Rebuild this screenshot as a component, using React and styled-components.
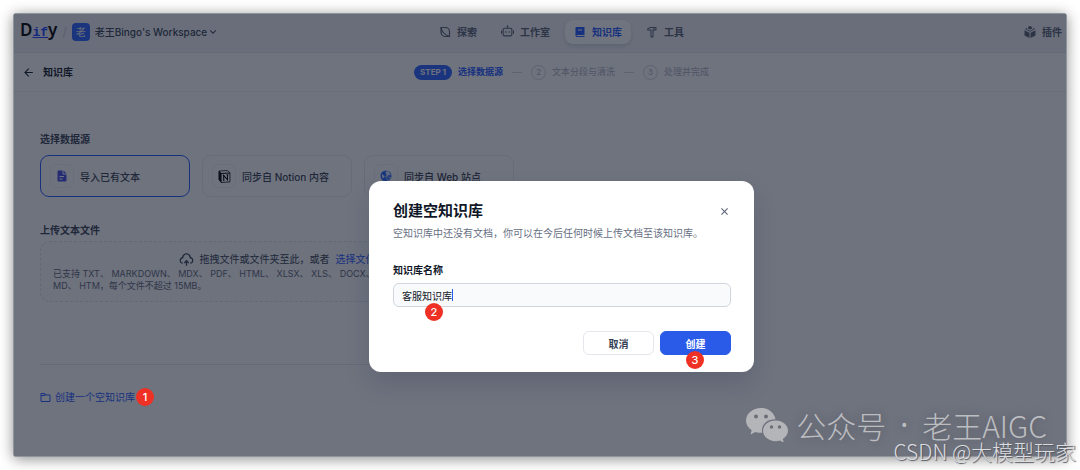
import React, { useState } from "react";
import styled, { createGlobalStyle } from "styled-components";
import {
  RiArrowDownSLine,
  RiArrowLeftLine,
  RiBook2Fill,
  RiCloseLine,
  RiHammerLine,
  RiRobot2Line,
  RiUploadCloud2Line,
} from "react-icons/ri";

const GlobalStyle = createGlobalStyle`
  * {
    box-sizing: border-box;
  }

  body {
    margin: 0;
    background: #ffffff;
    font-family: Inter, "Noto Sans CJK SC", sans-serif;
    font-size: 10px;
    line-height: 16px;
    color: #354052;
  }

  h1, h2, p {
    margin: 0;
  }

  button, input {
    font-family: inherit;
    font-size: 10px;
  }
`;

const Page = styled.div`
  position: relative;
  min-height: 100vh;
  padding: 13px;
  display: flex;
`;

const Window = styled.div`
  position: relative;
  flex: 1;
  min-width: 0;
  overflow: hidden;
  background: #fdfdff;
  border-radius: 4px;
  box-shadow: 0 2px 14px rgba(0, 0, 0, 0.45);
`;

const Header = styled.header`
  display: grid;
  grid-template-columns: 10fr auto 9fr;
  align-items: center;
  height: 40px;
  padding: 0 5px 2px 7px;
  background: #eff1f6;
  border-bottom: 1px solid #e4e6f0;
`;

const Brand = styled.div`
  display: flex;
  align-items: center;
`;

const Logo = styled.a`
  color: #000000;
  font-family: "Noto Sans", sans-serif;
  font-size: 17px;
  line-height: 24px;
  font-weight: 600;
  text-decoration: none;
`;

const LogoAccent = styled.span`
  color: #1a3cff;
  font-family: "Liberation Mono", monospace;
  font-size: 13px;
  font-weight: 700;
  text-decoration: underline;
`;

const Slash = styled.span`
  margin: 0 5px;
  color: #c3c7d4;
  font-size: 12px;
`;

const Avatar = styled.span`
  width: 18px;
  height: 18px;
  margin-right: 5px;
  border-radius: 4px;
  background: #2a62ff;
  color: #e6e9f2;
  line-height: 18px;
  text-align: center;
`;

const WorkspaceButton = styled.button`
  display: flex;
  align-items: center;
  padding: 0;
  border: none;
  background: none;
  color: #354052;
  font-weight: 500;
`;

const Nav = styled.nav`
  display: flex;
  gap: 6px;
`;

const NavItem = styled.a`
  display: flex;
  align-items: center;
  gap: 6px;
  height: 24px;
  padding: 0 9px;
  border-radius: 8px;
  color: ${(props) => (props.$active ? "#2458ff" : "#566074")};
  background: ${(props) => (props.$active ? "#ffffff" : "transparent")};
  box-shadow: ${(props) =>
    props.$active ? "0 2px 5px rgba(9, 20, 60, 0.14)" : "none"};
  font-weight: 600;
  text-decoration: none;
`;

const PluginLink = styled(NavItem)`
  justify-self: end;
  padding: 0;
`;

const SubHeader = styled.div`
  display: grid;
  grid-template-columns: 10fr auto 9fr;
  align-items: center;
  height: 39px;
  padding: 0 5px 0 9px;
  border-bottom: 1px solid #f0f1f7;
`;

const BackLink = styled.a`
  display: flex;
  align-items: center;
  gap: 8px;
  color: #101828;
  font-weight: 700;
  text-decoration: none;
`;

const Steps = styled.ol`
  display: flex;
  align-items: center;
  gap: 9px;
  margin: 0;
  padding: 0;
  list-style: none;
`;

const Step = styled.li`
  display: flex;
  align-items: center;
  gap: 6px;
  font-size: 9px;
  color: ${(props) => (props.$active ? "#2458ff" : "#a9afbd")};
  font-weight: ${(props) => (props.$active ? 700 : 400)};
`;

const StepPill = styled.span`
  height: 15px;
  padding: 0 6px;
  border-radius: 8px;
  background: #2a62ff;
  color: #f2f4fa;
  font-size: 8px;
  line-height: 15px;
`;

const StepCircle = styled.span`
  width: 15px;
  height: 15px;
  border: 1px solid #cfd3de;
  border-radius: 50%;
  font-size: 8px;
  line-height: 13px;
  text-align: center;
`;

const Dash = styled.li`
  width: 10px;
  height: 1px;
  background: #cfd3de;
`;

const Main = styled.main`
  max-width: 528px;
  padding: 39px 27px 0;
`;

const SectionTitle = styled.h2`
  font-size: 10px;
  line-height: 16px;
  font-weight: 700;
  color: #354052;
`;

const SourceList = styled.div`
  display: grid;
  grid-template-columns: repeat(3, 1fr);
  gap: 12px;
  margin: 8px 0 25px;
`;

const SourceCard = styled.button`
  display: flex;
  align-items: center;
  gap: 6px;
  height: 42px;
  padding: 0 9px;
  border: 1px solid ${(props) => (props.$active ? "#2458ff" : "#e6e8f3")};
  border-radius: 9px;
  background: none;
  color: #354052;
  font-weight: 500;
  white-space: nowrap;
`;

const SourceIcon = styled.span`
  display: flex;
  align-items: center;
  justify-content: center;
  width: 24px;
  height: 24px;
  border: 1px solid #f0f1f7;
  border-radius: 6px;
`;

const DropZone = styled.div`
  height: 61px;
  margin: 3px 0 62px;
  padding: 8px 12px;
  border: 1px dashed #dfe2ec;
  border-radius: 9px;
  background: #f8f9fc;
`;

const DropTitle = styled.div`
  display: flex;
  align-items: center;
  justify-content: center;
  gap: 6px;
  line-height: 18px;
`;

const Formats = styled.p`
  color: #5f6678;
  font-size: 9px;
  line-height: 12px;
  white-space: nowrap;
`;

const TextLink = styled.a`
  display: flex;
  align-items: center;
  gap: 4px;
  color: #2458ff;
  text-decoration: none;
`;

const CreateRow = styled.div`
  display: flex;
  align-items: center;
  gap: 1px;
  padding-top: 23px;
  border-top: 1px solid #e3e5ee;
`;

const Marker = styled.span`
  position: relative;
  z-index: 3;
  width: 18px;
  height: 18px;
  border-radius: 50%;
  background: #ee3124;
  color: #ffffff;
  font-size: 11px;
  line-height: 18px;
  font-weight: 500;
  text-align: center;
`;

const HangingMarker = styled(Marker)`
  position: absolute;
  top: ${(props) => props.$top}px;
  left: ${(props) => props.$left}px;
`;

const Overlay = styled.div`
  position: absolute;
  inset: 0;
  z-index: 2;
  display: flex;
  justify-content: center;
  align-items: flex-start;
  padding: 168px 0 0 43px;
  background: rgba(16, 24, 40, 0.6);
  box-shadow: inset 0 0 0 1px rgba(160, 164, 172, 0.7);
`;

const Dialog = styled.form`
  width: 385px;
  padding: 20px 23px 17px 24px;
  border-radius: 12px;
  background: #ffffff;
  box-shadow: 0 12px 24px rgba(16, 24, 60, 0.14);
`;

const DialogHeader = styled.div`
  display: flex;
  align-items: center;
  justify-content: space-between;
`;

const DialogTitle = styled.h1`
  color: #101828;
  font-size: 15px;
  line-height: 20px;
  font-weight: 700;
`;

const CloseButton = styled.button`
  display: flex;
  padding: 0;
  border: none;
  background: none;
  color: #5b6479;
`;

const DialogText = styled.p`
  margin: 4px 0 21px;
  color: #676f83;
  white-space: nowrap;
`;

const Label = styled.label`
  display: block;
  margin-bottom: 5px;
  color: #101828;
  font-weight: 700;
`;

const Field = styled.div`
  position: relative;
  margin-bottom: 24px;
`;

const TextInput = styled.input`
  display: block;
  width: 100%;
  height: 24px;
  padding: 0 8px;
  border: 1px solid #d0d5dd;
  border-radius: 6px;
  background: #f9fafb;
  color: #101828;
  outline: none;
`;

const Caret = styled.span`
  position: absolute;
  top: 6px;
  left: 59px;
  width: 1px;
  height: 12px;
  background: #2a5cf0;
`;

const Actions = styled.div`
  display: flex;
  justify-content: flex-end;
  gap: 6px;
`;

const Action = styled.div`
  position: relative;
`;

const Button = styled.button`
  width: 71px;
  height: 24px;
  padding: 0;
  border: 1px solid ${(props) => (props.$primary ? "#2a5ae8" : "#e4e7ec")};
  border-radius: 6px;
  background: ${(props) => (props.$primary ? "#2a5ae8" : "#ffffff")};
  color: ${(props) => (props.$primary ? "#ffffff" : "#344054")};
  font-weight: 600;
`;

const AccountMark = styled.div`
  position: absolute;
  right: 33px;
  bottom: 25px;
  z-index: 4;
  display: flex;
  align-items: center;
  gap: 8px;
  color: #bcbdc1;
  font-family: "Noto Sans CJK SC", sans-serif;
  font-size: 30px;
  font-weight: 300;
  line-height: 40px;
  text-shadow: 0 0 10px rgba(40, 42, 50, 0.4);
`;

const AccountDot = styled.span`
  width: 20px;
  font-family: "Noto Sans", sans-serif;
  font-weight: 400;
  text-align: center;
`;

const SiteMark = styled.div`
  position: absolute;
  right: 4px;
  bottom: 5px;
  z-index: 5;
  color: #dcdde0;
  font-family: "Noto Sans CJK SC", sans-serif;
  font-size: 21px;
  font-weight: 300;
  line-height: 28px;
  text-shadow: 1px 1px 1px #55575e;
`;

const ExploreIcon = () => (
  <svg width="12" height="12" viewBox="0 0 24 24" fill="none" stroke="currentColor" strokeWidth="2.4">
    <path d="M4 3h9a8 8 0 0 1 8 8v10h-9a8 8 0 0 1-6-3 9 9 0 0 1-2-6z" strokeLinejoin="round" />
    <path d="M4 3c1 8 6 14 17 18" />
  </svg>
);

const PluginIcon = () => (
  <svg width="12" height="12" viewBox="0 0 24 24" fill="currentColor">
    <path d="M12 0l4 2v3l-4 2-4-2V2zM2 6l4-2v2.500l6 3 6-3V4l4 2-10 5.500zM1 8.500l10 5V24l-10-5zM23 8.500l-10 5V24l10-5z" />
  </svg>
);

const FileIcon = () => (
  <svg width="12" height="12" viewBox="0 0 24 24" fill="#444ce7">
    <path d="M4 1h9v6a2 2 0 0 0 2 2h6v12a2 2 0 0 1-2 2H5a2 2 0 0 1-2-2V3a2 2 0 0 1 1-2zM15 1l6 6h-6z" />
    <path d="M7 13h9M7 18h6" stroke="#ffffff" strokeWidth="2" />
  </svg>
);

const NotionIcon = () => (
  <svg width="13" height="13" viewBox="0 0 24 24" fill="none" stroke="#000000">
    <path d="M2 2l15-1 5 4v17l-16 1-4-5z" fill="#ffffff" strokeWidth="1.500" strokeLinejoin="round" />
    <path d="M2 2l4 4v17l-4-5z" fill="#000000" />
    <path d="M6 6.500l16-1" strokeWidth="2" />
    <path d="M10.500 19v-9l7 8V9M9 10h3M9 19h3M16 9h3" strokeWidth="2" />
  </svg>
);

const GlobeIcon = () => (
  <svg width="12" height="12" viewBox="0 0 24 24">
    <circle cx="12" cy="12" r="11" fill="#2a6aff" />
    <path d="M13 2c4 0 8 4 8 9l-4-1-2 2-3-1 1-3-2-2zM4 8l5 4-1 5-4-3z" fill="#dfe8ff" />
    <path d="M11 12l12 4-5 2-2 5z" fill="#2a6aff" stroke="#ffffff" />
  </svg>
);

const FolderIcon = () => (
  <svg width="11" height="11" viewBox="0 0 22 22" fill="none" stroke="currentColor" strokeWidth="2">
    <path d="M2 3h7l2 3h9v13H2z" strokeLinejoin="round" />
    <path d="M2 7h8V3" />
  </svg>
);

const WechatIcon = () => (
  <svg width="42" height="34" viewBox="0 0 42 34" fill="#b4b5b9">
    <path d="M15 0C6.700 0 0 5.600 0 12.500c0 4 2.200 7.400 5.700 9.700L4.500 26.500l5-2.600c1.700.5 3.600.9 5.500.9h1.200C14.500 17 21 10.800 29.500 11.200 28.300 4.800 22.300 0 15 0z" />
    <path d="M29.500 12.500c-7 0-12.500 4.600-12.500 10.300s5.500 10.400 12.500 10.400c1.500 0 3-.2 4.300-.6l4 2-1-3.600c3.200-2 5.200-5 5.200-8.200 0-5.700-5.500-10.300-12.500-10.300z" />
    <g fill="#6b6e77">
      <circle cx="10" cy="8.500" r="2" />
      <circle cx="20" cy="8.500" r="2" />
      <circle cx="25.500" cy="19" r="1.700" />
      <circle cx="33.500" cy="19" r="1.700" />
    </g>
  </svg>
);

const App = () => {
  const [name, setName] = useState("客服知识库");

  return (
    <>
      <GlobalStyle />
      <Page>
        <Window>
          <Header>
            <Brand>
              <Logo href="#">
                D<LogoAccent>if</LogoAccent>y
              </Logo>
              <Slash>/</Slash>
              <Avatar>老</Avatar>
              <WorkspaceButton type="button">
                老王Bingo's Workspace
                <RiArrowDownSLine size={12} />
              </WorkspaceButton>
            </Brand>
            <Nav>
              <NavItem href="#explore">
                <ExploreIcon />
                探索
              </NavItem>
              <NavItem href="#studio">
                <RiRobot2Line size={13} />
                工作室
              </NavItem>
              <NavItem href="#datasets" $active>
                <RiBook2Fill size={12} />
                知识库
              </NavItem>
              <NavItem href="#tools">
                <RiHammerLine size={12} />
                工具
              </NavItem>
            </Nav>
            <PluginLink href="#plugins">
              <PluginIcon />
              插件
            </PluginLink>
          </Header>

          <SubHeader>
            <BackLink href="#datasets">
              <RiArrowLeftLine size={13} />
              知识库
            </BackLink>
            <Steps>
              <Step $active>
                <StepPill>STEP 1</StepPill>
                选择数据源
              </Step>
              <Dash />
              <Step>
                <StepCircle>2</StepCircle>
                文本分段与清洗
              </Step>
              <Dash />
              <Step>
                <StepCircle>3</StepCircle>
                处理并完成
              </Step>
            </Steps>
          </SubHeader>

          <Main>
            <SectionTitle>选择数据源</SectionTitle>
            <SourceList>
              <SourceCard type="button" $active>
                <SourceIcon>
                  <FileIcon />
                </SourceIcon>
                导入已有文本
              </SourceCard>
              <SourceCard type="button">
                <SourceIcon>
                  <NotionIcon />
                </SourceIcon>
                同步自 Notion 内容
              </SourceCard>
              <SourceCard type="button">
                <SourceIcon>
                  <GlobeIcon />
                </SourceIcon>
                同步自 Web 站点
              </SourceCard>
            </SourceList>

            <SectionTitle>上传文本文件</SectionTitle>
            <DropZone>
              <DropTitle>
                <RiUploadCloud2Line size={15} />
                拖拽文件或文件夹至此，或者
                <TextLink href="#browse">选择文件</TextLink>
              </DropTitle>
              <Formats>
                已支持 TXT、 MARKDOWN、 MDX、 PDF、 HTML、 XLSX、 XLS、 DOCX、
                <br />
                MD、 HTM，每个文件不超过 15MB。
              </Formats>
            </DropZone>

            <CreateRow>
              <TextLink href="#create">
                <FolderIcon />
                创建一个空知识库
              </TextLink>
              <Marker>1</Marker>
            </CreateRow>
          </Main>

          <Overlay>
            <Dialog onSubmit={(e) => e.preventDefault()}>
              <DialogHeader>
                <DialogTitle>创建空知识库</DialogTitle>
                <CloseButton type="button" aria-label="关闭">
                  <RiCloseLine size={13} />
                </CloseButton>
              </DialogHeader>
              <DialogText>
                空知识库中还没有文档，你可以在今后任何时候上传文档至该知识库。
              </DialogText>
              <Label htmlFor="dataset-name">知识库名称</Label>
              <Field>
                <TextInput
                  id="dataset-name"
                  value={name}
                  onChange={(e) => setName(e.target.value)}
                />
                <Caret />
                <HangingMarker $top={20} $left={32}>
                  2
                </HangingMarker>
              </Field>
              <Actions>
                <Action>
                  <Button type="button">取消</Button>
                </Action>
                <Action>
                  <Button type="submit" $primary>
                    创建
                  </Button>
                  <HangingMarker $top={20} $left={26}>
                    3
                  </HangingMarker>
                </Action>
              </Actions>
            </Dialog>
          </Overlay>
        </Window>

        <AccountMark>
          <WechatIcon />
          <span>公众号</span>
          <AccountDot>·</AccountDot>
          <span>老王AIGC</span>
        </AccountMark>
        <SiteMark>CSDN @大模型玩家</SiteMark>
      </Page>
    </>
  );
};

export default App;
